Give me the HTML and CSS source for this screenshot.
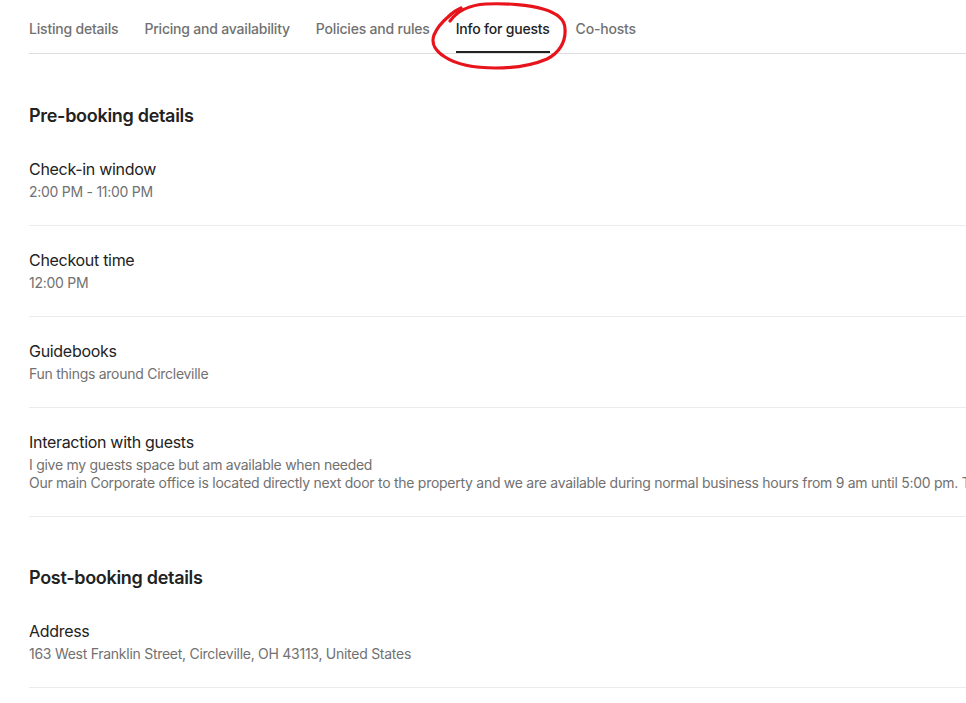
FILE: index.html
```html
<!DOCTYPE html>
<html lang="en">
<head>
<meta charset="utf-8">
<title>Info for guests</title>
<link rel="stylesheet" href="styles.css">
</head>
<body>
<div class="page">
  <nav class="tabs">
    <a class="tab">Listing details</a>
    <a class="tab">Pricing and availability</a>
    <a class="tab">Policies and rules</a>
    <a class="tab active">Info for guests</a>
    <a class="tab">Co-hosts</a>
  </nav>

  <section class="section">
    <h2 class="section-title">Pre-booking details</h2>
    <div class="item">
      <div class="item-title">Check-in window</div>
      <div class="item-sub">2:00 PM - 11:00 PM</div>
    </div>
    <div class="item">
      <div class="item-title">Checkout time</div>
      <div class="item-sub">12:00 PM</div>
    </div>
    <div class="item">
      <div class="item-title">Guidebooks</div>
      <div class="item-sub">Fun things around Circleville</div>
    </div>
    <div class="item">
      <div class="item-title">Interaction with guests</div>
      <div class="item-sub">I give my guests space but am available when needed</div>
      <div class="item-sub">Our main Corporate office is located directly next door to the property and we are available during normal business hours from 9 am until 5:00 pm. Text us anytime.</div>
    </div>
  </section>

  <section class="section section-post">
    <h2 class="section-title">Post-booking details</h2>
    <div class="item">
      <div class="item-title">Address</div>
      <div class="item-sub">163 West Franklin Street, Circleville, OH 43113, United States</div>
    </div>
  </section>
</div>

<svg class="annotation" width="150" height="75" viewBox="0 0 150 75" aria-hidden="true">
  <path d="M20 20 C28 9 40 4 56 3 C76 2 100 4 113 8 C127 12 135 18 135 28 C136 41 129 52 117 58 C103 64 85 67 66 67 C46 67 27 64 15 56 C5 50 1 42 4 34 C7 27 12 21 18 16 C22 12 26 9 31 7"
        fill="none" stroke="#e8141b" stroke-width="3.2" stroke-linecap="round" stroke-linejoin="round"/>
</svg>
</body>
</html>
```

FILE: styles.css
```css
html, body {
  margin: 0;
  padding: 0;
  background: #ffffff;
  overflow: hidden;
}

body {
  font-family: Inter, "Noto Sans", "Liberation Sans", sans-serif;
  color: #222222;
  position: relative;
  width: 966px;
  height: 703px;
}

.page {
  padding-left: 29px;
  width: 1200px;
}

.tabs {
  display: flex;
  gap: 26px;
  height: 53px;
  border-bottom: 1px solid #dddddd;
}

.tab {
  display: flex;
  align-items: flex-start;
  padding-top: 20px;
  box-sizing: border-box;
  height: 53px;
  font-size: 14px;
  line-height: 18px;
  letter-spacing: -0.2px;
  color: #717171;
  font-weight: 500;
  border-bottom: 2px solid transparent;
  cursor: pointer;
}

.tab.active {
  color: #222222;
  border-bottom-color: #222222;
}

.section {
  padding-top: 51px;
}

.section-post {
  padding-top: 50px;
}

.section-title {
  margin: 0 0 8px 0;
  font-size: 18px;
  line-height: 22px;
  font-weight: 600;
  letter-spacing: -0.3px;
  color: #222222;
}

.item {
  padding: 24px 0;
  border-bottom: 1px solid #ebebeb;
}

.item-title {
  font-size: 16px;
  line-height: 20px;
  letter-spacing: -0.3px;
  color: #222222;
  margin-bottom: 4px;
}

.item-sub {
  font-size: 14px;
  line-height: 18px;
  letter-spacing: -0.27px;
  color: #717171;
  white-space: nowrap;
}

.annotation {
  position: absolute;
  left: 430px;
  top: 1px;
}
```
